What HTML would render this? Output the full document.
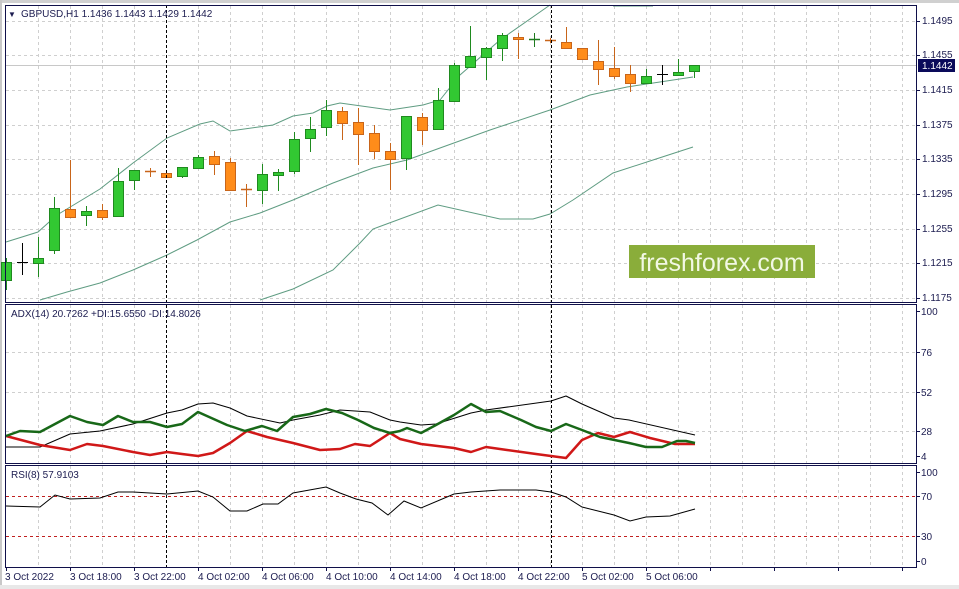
<!DOCTYPE html>
<html><head><meta charset="utf-8"><style>
html,body{margin:0;padding:0;background:#fff;width:959px;height:589px;overflow:hidden}
svg{display:block}
text{font-family:"Liberation Sans",sans-serif;font-size:10px;fill:#1c1c50}
</style></head><body>
<svg id="s" width="959" height="589" viewBox="0 0 959 589">
<rect x="0" y="0" width="959" height="589" fill="#fff"/>
<rect x="0" y="0" width="959" height="3" fill="#d0d0d0"/>
<rect x="0" y="0" width="2" height="589" fill="#c8c8c8"/>
<rect x="0" y="585" width="959" height="4" fill="#e8e8e8"/>
<g id="grid" stroke="#cfcfcf" stroke-dasharray="3,3" stroke-width="1"></g>
<line x1="6" y1="65.5" x2="917" y2="65.5" stroke="#c8c8c8"/>
<g id="bb" fill="none" stroke="#5f9c82" stroke-width="1">
<polyline points="6,242 38,232 57,215 100,189 133,163 167,138 200,124 213,121 230,131 273,125 293,116 313,113 327,106 340,103 390,110 423,105 440,100 460,75 500,40 550,5"/>
<polyline points="613,6 653,6"/>
<polyline points="40,300 67,292 100,283 133,270 167,255 197,240 230,222 260,213 293,200 333,183 373,168 407,160 440,148 490,130 550,110 590,95 627,87 693,77"/>
<polyline points="260,300 293,289 333,270 360,243 373,229 438,205 500,219 533,219 550,214 573,200 613,173 653,160 693,147"/>
</g>
<g id="candles"></g>
<rect x="629" y="245" width="186" height="33" fill="#8aad3a"/>
<text x="722" y="271" text-anchor="middle" style="font-size:25px;fill:#f2f8e4">freshforex.com</text>
<line x1="166.5" y1="5" x2="166.5" y2="568" stroke="#000" stroke-dasharray="3,2"/>
<line x1="551.5" y1="5" x2="551.5" y2="568" stroke="#000" stroke-dasharray="3,2"/>
<!-- ADX -->
<g fill="none" stroke-linejoin="round">
<polyline stroke="#000" stroke-width="1" points="6,447 40,447 70,434 100,431 133,424 167,413 182,410 198,404 213,403 230,408 247,416 280,423 293,420 320,415 340,410 370,412 390,420 400,422 421,425 436,424 471,413 486,410 551,401 566,396 582,404 614,418 629,420 695,435"/>
<polyline stroke="#d01818" stroke-width="2.5" points="6,436 40,445 70,450 87,444 103,446 133,452 150,455 167,452 182,454 198,456 213,453 230,443 247,431 267,437 293,443 320,450 340,449 355,444 370,446 390,433 400,439 421,444 454,448 471,452 486,447 507,450 536,454 551,456 566,458 582,440 598,433 614,437 630,432 650,438 675,444 695,444"/>
<polyline stroke="#186818" stroke-width="2.5" points="6,436 20,431 40,432 70,416 87,422 103,425 118,416 133,422 150,422 167,427 182,424 198,412 227,425 245,431 262,426 277,431 293,417 310,414 326,409 342,413 358,420 374,428 390,433 400,431 407,428 421,433 436,425 454,415 471,404 486,412 500,411 521,420 536,427 551,431 566,424 582,430 600,437 629,443 646,447 662,447 677,441 686,441 695,443"/>
</g>
<!-- RSI -->
<line x1="6" y1="496.5" x2="917" y2="496.5" stroke="#c02020" stroke-dasharray="3,3"/>
<line x1="6" y1="536.5" x2="917" y2="536.5" stroke="#c02020" stroke-dasharray="3,3"/>
<polyline fill="none" stroke="#000" stroke-width="1" points="6,506 40,507 55,495 70,499 100,498 118,492 133,492 167,494 198,491 213,497 230,511 247,511 263,504 278,504 293,493 326,487 340,493 356,499 372,503 388,515 404,501 421,508 454,494 471,492 500,490 536,490 551,492 566,497 582,507 614,515 630,521 646,517 670,516 695,509"/>
<!-- panel borders -->
<g fill="none" stroke="#10104a" stroke-width="1">
<rect x="5.5" y="5.5" width="911" height="297"/>
<rect x="5.5" y="304.5" width="911" height="159"/>
<rect x="5.5" y="465.5" width="911" height="102"/>
</g>
<g id="ticks" stroke="#10104a"></g>
<text x="8" y="17" style="font-size:8px">▼</text>
<text x="21" y="17">GBPUSD,H1  1.1436 1.1443 1.1429 1.1442</text>
<text x="11" y="317">ADX(14) 20.7262 +DI:15.6550 -DI:14.8026</text>
<text x="11" y="478">RSI(8) 57.9103</text>
<g>
<text x="922" y="24">1.1495</text>
<text x="922" y="58">1.1455</text>
<text x="922" y="93">1.1415</text>
<text x="922" y="128">1.1375</text>
<text x="922" y="162">1.1335</text>
<text x="922" y="197">1.1295</text>
<text x="922" y="232">1.1255</text>
<text x="922" y="266">1.1215</text>
<text x="922" y="301">1.1175</text>
<rect x="918" y="59" width="37" height="13" fill="#0a0a5a"/>
<text x="922" y="69" style="fill:#fff">1.1442</text>
<text x="921" y="315">100</text>
<text x="921" y="356">76</text>
<text x="921" y="396">52</text>
<text x="921" y="435">28</text>
<text x="921" y="460">4</text>
<text x="921" y="476">100</text>
<text x="921" y="500">70</text>
<text x="921" y="540">30</text>
<text x="921" y="565">0</text>
</g>
<g>
<text x="5" y="580">3 Oct 2022</text>
<text x="70" y="580">3 Oct 18:00</text>
<text x="134" y="580">3 Oct 22:00</text>
<text x="198" y="580">4 Oct 02:00</text>
<text x="262" y="580">4 Oct 06:00</text>
<text x="326" y="580">4 Oct 10:00</text>
<text x="390" y="580">4 Oct 14:00</text>
<text x="454" y="580">4 Oct 18:00</text>
<text x="518" y="580">4 Oct 22:00</text>
<text x="582" y="580">5 Oct 02:00</text>
<text x="646" y="580">5 Oct 06:00</text>
</g>
</svg>
<script>
var NS="http://www.w3.org/2000/svg";
function el(p,t,a){var e=document.createElementNS(NS,t);for(var k in a)e.setAttribute(k,a[k]);p.appendChild(e);return e;}
var g=document.getElementById('grid');
for(var x=38;x<=902;x+=32){if(x==166)continue;[[6,302],[305,463],[466,567]].forEach(function(r){el(g,'line',{x1:x+.5,y1:r[0],x2:x+.5,y2:r[1]});});}
[21,55,90,125,159,194,229,263,298].forEach(function(y){el(g,'line',{x1:6,y1:y+.5,x2:917,y2:y+.5});});
[352,392,431].forEach(function(y){el(g,'line',{x1:6,y1:y+.5,x2:917,y2:y+.5});});
var tk=document.getElementById('ticks');
[21,55,90,125,159,194,229,263,298,311,352,392,431,456,472,496,536,561].forEach(function(y){el(tk,'line',{x1:917,y1:y+.5,x2:920,y2:y+.5});});
for(var x=6;x<=917;x+=64){el(tk,'line',{x1:x+.5,y1:568,x2:x+.5,y2:571});}
// type, bodyTop, bodyBot, wickTop, wickBot  (g=green,o=orange,x=black cross,gx green cross,ox orange cross)
var C=[['g',262,280,258,290],['x',262,262,243,275],['g',258,263,237,277],['g',208,250,197,254],['o',209,217,160,218],['g',211,215,206,226],['o',210,217,204,220],['g',181,216,168,216],['g',170,180,170,190],['ox',171,171,168,177],['o',173,177,173,177],['g',167,176,167,178],['g',157,168,155,169],['o',156,164,151,175],['o',162,190,158,190],['ox',189,189,184,207],['g',174,190,164,204],['g',172,175,169,191],['g',139,171,132,174],['g',129,138,117,152],['g',110,127,100,136],['o',111,123,107,140],['o',122,134,108,165],['o',133,151,125,159],['o',151,159,143,190],['g',116,158,116,170],['o',117,130,113,145],['g',100,129,88,129],['g',65,101,63,102],['g',56,67,26,67],['g',48,57,47,80],['g',35,48,33,61],['o',37,39,33,59],['gx',39,39,33,47],['ox',40,40,38,43],['o',42,48,27,49],['o',48,59,48,60],['o',61,69,40,85],['o',68,76,47,79],['o',74,83,65,92],['g',76,83,69,83],['x',74,74,65,85],['g',72,75,59,75],['g',65,71,65,78]];
var cg=document.getElementById('candles');
C.forEach(function(c,i){var cx=6+16*i,t=c[0];
var col=t[0]=='g'?'#1f8a1f':t[0]=='o'?'#c8651a':'#000';
if(t=='gx')col='#1f7a1f';if(t=='ox')col='#c8651a';
el(cg,'line',{x1:cx+.5,y1:c[3],x2:cx+.5,y2:c[4],stroke:col});
if(t.length==2||t=='x'){el(cg,'line',{x1:cx-5,y1:c[1]+.5,x2:cx+6,y2:c[1]+.5,stroke:col,'stroke-width':t=='x'?1:1.5});}
else{var h=Math.max(c[2]-c[1],2);el(cg,'rect',{x:cx-4.5,y:c[1]+.5,width:10,height:h,fill:t=='g'?'#32c832':'#ff8c1a',stroke:col});}
});
</script>
</body></html>
